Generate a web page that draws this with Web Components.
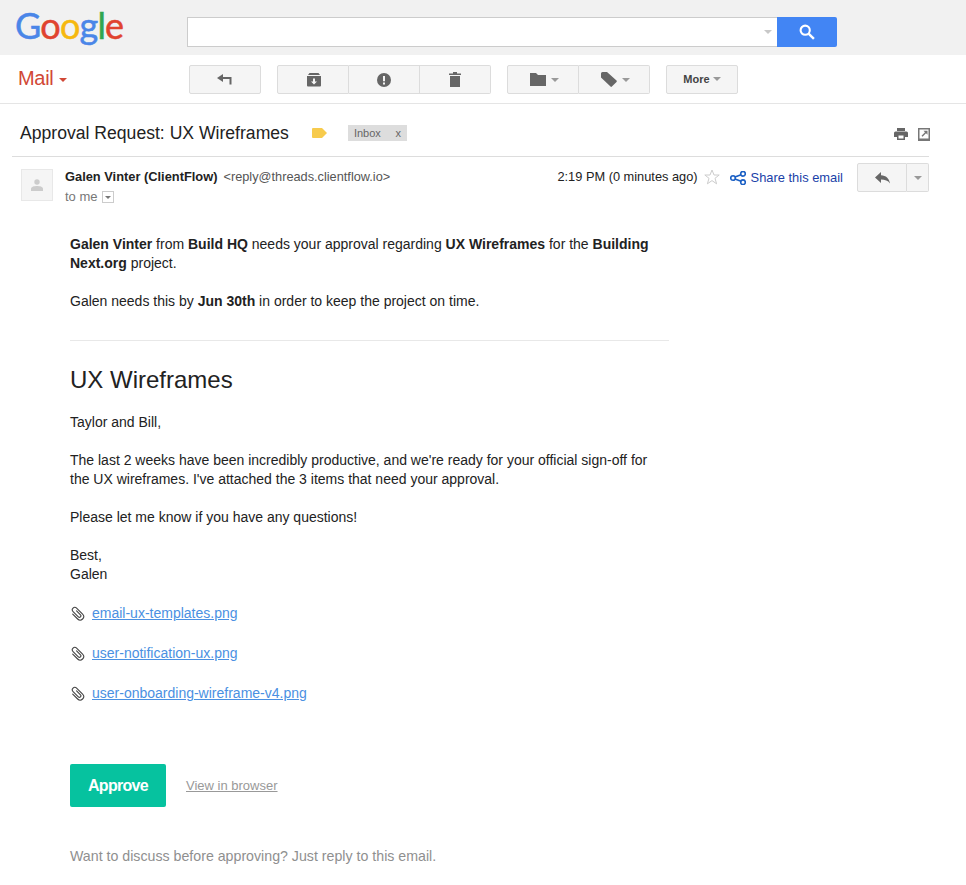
<!DOCTYPE html>
<html>
<head>
<meta charset="utf-8">
<title>Approval Request: UX Wireframes</title>
<style>
  html, body { margin: 0; padding: 0; background: #fff; }
  body { font-family: "Liberation Sans", Arial, sans-serif; color: #222; height: 885px; overflow: hidden; }
</style>
</head>
<body>
<mail-header></mail-header>
<mail-toolbar></mail-toolbar>
<mail-subject></mail-subject>
<mail-meta></mail-meta>
<mail-body>
  <attach-link slot="files">email-ux-templates.png</attach-link>
  <attach-link slot="files">user-notification-ux.png</attach-link>
  <attach-link slot="files">user-onboarding-wireframe-v4.png</attach-link>
</mail-body>

<script>
class MailHeader extends HTMLElement {
  constructor() {
    super();
    this.attachShadow({ mode: "open" });
  }
  connectedCallback() {
    this.shadowRoot.innerHTML = `
      <style>
        :host { display: flex; height: 55px; background: #f1f1f1; box-sizing: border-box; }
        .logo {
          width: 187px; box-sizing: border-box; padding: 0 0 0 15px;
          font: 36px/50px Lato, sans-serif; letter-spacing: -0.8px;
          -webkit-text-stroke: 0.5px currentColor;
        }
        .b { color: #4a86e8; } .r { color: #e0432f; } .y { color: #f6b80e; } .g { color: #2fa650; }
        .search {
          margin-top: 17px; width: 590px; height: 30px; box-sizing: border-box;
          background: #fff; border: 1px solid #ccc; border-right: 0;
          display: flex; align-items: center; justify-content: flex-end; padding-right: 5px;
        }
        .caret { width: 0; height: 0; border: 4px solid transparent; border-top: 4px solid #c8c8c8; border-bottom: 0; }
        .go {
          margin-top: 17px; width: 60px; height: 30px; background: #4285f4; border-radius: 0 2px 2px 0;
          display: flex; align-items: center; justify-content: center;
        }
      </style>
      <div class="logo"><span class="b">G</span><span class="r">o</span><span class="y">o</span><span class="b">g</span><span class="g">l</span><span class="r">e</span></div>
      <div class="search"><span class="caret"></span></div>
      <div class="go">
        <svg width="16" height="16" viewBox="0 0 16 16" fill="none" stroke="#fff" stroke-width="2.1">
          <circle cx="6.2" cy="6.2" r="4.6"/><path d="M9.6 9.6l5.3 5.2" stroke-width="2.4"/>
        </svg>
      </div>
    `;
  }
}
customElements.define("mail-header", MailHeader);

const ICONS = {
  back: `<svg width="15" height="11" viewBox="0 0 15 11"><path d="M6 0v3h8.500v7.500h-2V5H6v3L0 4z" fill="#666"/></svg>`,
  archive: `<svg width="14" height="14" viewBox="0 0 14 14"><path d="M2.500 0h9L13 2H1z" fill="#666"/><path d="M0 3h14v9.500a1 1 0 0 1-1 1H1a1 1 0 0 1-1-1z" fill="#666"/><path d="M6 5.500h2v3h2l-3 3-3-3h2z" fill="#f5f5f5"/></svg>`,
  spam: `<svg width="14" height="14" viewBox="0 0 14 14"><circle cx="7" cy="7" r="7" fill="#666"/><path d="M6 3h2v5.200H6zM6 9.400h2v2H6z" fill="#f5f5f5"/></svg>`,
  trash: `<svg width="12" height="15" viewBox="0 0 12 15"><path d="M0 1.500h4V0h4v1.500h4v1.600H0zM1 4h10v11H1z" fill="#666"/></svg>`,
  folder: `<svg width="16" height="13" viewBox="0 0 16 13"><path d="M0 0h6l2 2h8v11H0z" fill="#666"/></svg>`,
  tag: `<svg width="16" height="15" viewBox="0 0 16 15"><path d="M0 1.500A1.500 1.500 0 0 1 1.500 0H6l9.500 8.500a1 1 0 0 1 0 1.400l-4.600 4.700a1 1 0 0 1-1.400 0L0 5.500z" fill="#666"/></svg>`
};

class ToolBtn extends HTMLElement {
  constructor() {
    super();
    this.attachShadow({ mode: "open" });
  }
  connectedCallback() {
    const icon = this.getAttribute("icon");
    const caret = this.hasAttribute("caret");
    this.shadowRoot.innerHTML = `
      <style>
        :host {
          display: flex; align-items: center; justify-content: center; gap: 5px;
          box-sizing: border-box; height: 29px; flex: none;
          background: #f5f5f5; border: 1px solid #dcdcdc; border-radius: 2px; color: #444;
          font: bold 11px "Liberation Sans", Arial, sans-serif;
        }
        :host([mid]) { border-radius: 0; border-left: 0; }
        :host([first]) { border-radius: 2px 0 0 2px; }
        :host([last]) { border-radius: 0 2px 2px 0; border-left: 0; }
        .caret { width: 0; height: 0; border: 4px solid transparent; border-top: 4px solid #999; border-bottom: 0; }
      </style>
      ${icon ? ICONS[icon] : ""}<slot></slot>${caret ? `<span class="caret"></span>` : ""}
    `;
  }
}
customElements.define("tool-btn", ToolBtn);

class MailToolbar extends HTMLElement {
  constructor() {
    super();
    this.attachShadow({ mode: "open" });
  }
  connectedCallback() {
    this.shadowRoot.innerHTML = `
      <style>
        :host {
          display: flex; align-items: flex-start; height: 49px; box-sizing: border-box;
          padding-top: 10px; border-bottom: 1px solid #e5e5e5;
        }
        .mail {
          width: 189px; box-sizing: border-box; padding-left: 18px; color: #d14836;
          font-size: 20px; line-height: 26px; display: flex; align-items: center; gap: 6px;
          letter-spacing: -0.3px;
        }
        .mail i { width: 0; height: 0; border: 4px solid transparent; border-top: 4px solid #d14836; border-bottom: 0; margin-top: 3px; }
        .group { display: flex; }
      </style>
      <div class="mail">Mail<i></i></div>
      <tool-btn icon="back" style="width:72px;margin-right:16px;padding-right:1px"></tool-btn>
      <div class="group" style="margin-right:16px">
        <tool-btn icon="archive" first style="width:72px;padding-left:2px"></tool-btn>
        <tool-btn icon="spam" mid style="width:71px"></tool-btn>
        <tool-btn icon="trash" last style="width:71px"></tool-btn>
      </div>
      <div class="group" style="margin-right:16px">
        <tool-btn icon="folder" caret first style="width:72px;padding-left:3px"></tool-btn>
        <tool-btn icon="tag" caret last style="width:71px;padding-left:2px"></tool-btn>
      </div>
      <tool-btn caret style="width:72px;gap:3px;padding-bottom:1px">More</tool-btn>
    `;
  }
}
customElements.define("mail-toolbar", MailToolbar);

class MailSubject extends HTMLElement {
  constructor() {
    super();
    this.attachShadow({ mode: "open" });
  }
  connectedCallback() {
    this.shadowRoot.innerHTML = `
      <style>
        :host {
          display: flex; align-items: center; height: 53px; box-sizing: border-box;
          margin: 0 37px 0 12px; padding: 6px 0 0 8px; border-bottom: 1px solid #ddd;
        }
        .title { font-size: 17.6px; color: #222; margin-right: 23px; }
        .label { margin-right: 21px; display: flex; }
        .chip {
          background: #ddd; color: #666; font-size: 11px; height: 16px; line-height: 16px;
          width: 59px; box-sizing: border-box; padding: 0 6px; display: flex; justify-content: space-between;
        }
        .tools { margin: 0 -1px 0 auto; display: flex; align-items: center; gap: 10px; padding-top: 2px; }
      </style>
      <span class="title">Approval Request: UX Wireframes</span>
      <span class="label">
        <svg width="15" height="10" viewBox="0 0 15 10"><path d="M1 0h9l5 5-5 5H1a1 1 0 0 1-1-1V1a1 1 0 0 1 1-1z" fill="#f7cb4d"/></svg>
      </span>
      <span class="chip"><span>Inbox</span><span>x</span></span>
      <span class="tools">
        <svg width="14" height="12" viewBox="0 0 14 12"><path d="M3 0h8v3H3zM1.500 3.500h11A1.500 1.500 0 0 1 14 5v4h-3v3H3V9H0V5a1.500 1.500 0 0 1 1.500-1.500zM4.500 7.500v3h5v-3z" fill="#666"/></svg>
        <svg width="12" height="13" viewBox="0 0 12 13"><path d="M0 0h12v13H0z" fill="#777"/><path d="M1.500 1.500h9v9h-9z" fill="#fff"/><path d="M5.500 2.800h4v4L8 5.300 4.500 8.800 3.500 7.800 7 4.300z" fill="#777"/></svg>
      </span>
    `;
  }
}
customElements.define("mail-subject", MailSubject);

class MailMeta extends HTMLElement {
  constructor() {
    super();
    this.attachShadow({ mode: "open" });
  }
  connectedCallback() {
    this.shadowRoot.innerHTML = `
      <style>
        :host { display: flex; align-items: flex-start; padding: 12px 37px 0 21px; height: 57px; box-sizing: border-box; font-size: 12.700px; }
        .avatar {
          width: 32px; height: 32px; box-sizing: border-box; background: #f5f5f5; border: 1px solid #e8e8e8;
          display: flex; align-items: center; justify-content: center; margin-right: 12px; flex: none;
        }
        .who { line-height: 16px; }
        .line { display: flex; align-items: baseline; }
        b { color: #222; margin-right: 6px; font-size: 12.850px; }
        .addr { color: #555; font-size: 12.750px; }
        .to { color: #777; display: flex; align-items: center; gap: 4px; margin-top: 4px; font-size: 13px; }
        .to i {
          width: 10px; height: 10px; border: 1px solid #ccc; display: flex; align-items: center; justify-content: center;
        }
        .to i::after { content: ""; border: 3px solid transparent; border-top: 3px solid #777; border-bottom: 0; }
        .right { margin: -6px 0 0 auto; display: flex; align-items: center; }
        .time { color: #222; line-height: 16px; margin-right: 6px; padding-bottom: 1px; font-size: 12.800px; }
        .star { margin: 0 10px 2px 0; }
        .share { display: flex; align-items: center; gap: 5px; color: #1a3fa8; font-size: 12.900px; line-height: 16px; margin-right: 14px; }
        .reply { display: flex; }
      </style>
      <div class="avatar">
        <svg width="12" height="12" viewBox="0 0 12 12"><circle cx="6" cy="3" r="2.700" fill="#ccc"/><path d="M0 12V9.500C0 7.800 3.500 7 6 7s6 .8 6 2.500V12z" fill="#ccc"/></svg>
      </div>
      <div class="who">
        <div class="line"><b>Galen Vinter (ClientFlow)</b><span class="addr">&lt;reply@threads.clientflow.io&gt;</span></div>
        <div class="to">to me <i></i></div>
      </div>
      <div class="right">
        <span class="time">2:19 PM (0 minutes ago)</span>
        <svg class="star" width="16" height="16" viewBox="0 0 16 16"><path d="M8 1l2 5h5.200l-4.200 3.300 1.600 5.500L8 11.600l-4.600 3.200L5 9.300.8 6H6z" fill="none" stroke="#ccc"/></svg>
        <span class="share">
          <svg width="16" height="14" viewBox="0 0 16 14" fill="none" stroke="#1a5fc4" stroke-width="1.600"><circle cx="3" cy="7" r="2.300"/><circle cx="13" cy="2.800" r="2.300"/><circle cx="13" cy="11.200" r="2.300"/><path d="M5 6l6-2.300M5 8l6 2.300"/></svg>
          Share this email
        </span>
        <div class="reply">
          <tool-btn first style="width:50px"><svg width="15" height="12" viewBox="0 0 15 12"><path d="M6 0v3.200c5 .3 8 3 9 8.300-2-3-5-4-9-4V11L0 5.500z" fill="#666"/></svg></tool-btn>
          <tool-btn last caret style="width:22px"></tool-btn>
        </div>
      </div>
    `;
  }
}
customElements.define("mail-meta", MailMeta);

class AttachLink extends HTMLElement {
  constructor() {
    super();
    this.attachShadow({ mode: "open" });
  }
  connectedCallback() {
    this.shadowRoot.innerHTML = `
      <style>
        :host { display: flex; align-items: center; gap: 6px; height: 19px; margin-bottom: 21px; }
        a { color: #4a90e2; text-decoration: underline; font-size: 14px; }
        svg { flex: none; margin-top: -2px; }
      </style>
      <svg width="16" height="16" viewBox="0 0 16 16" fill="none" stroke="#444" stroke-width="1.100" stroke-linecap="round">
        <path transform="rotate(-45 8 8)" d="M8.500 5.500V11a1.500 1.500 0 0 1-3 0V3.500a2.500 2.500 0 0 1 5 0V12a3.500 3.500 0 0 1-7 0V5"/>
      </svg>
      <a href="#"><slot></slot></a>
    `;
  }
}
customElements.define("attach-link", AttachLink);

class MailBody extends HTMLElement {
  constructor() {
    super();
    this.attachShadow({ mode: "open" });
  }
  connectedCallback() {
    this.shadowRoot.innerHTML = `
      <style>
        :host {
          display: block; width: 600px; margin-left: 70px; padding-top: 21px;
          font-size: 14px; line-height: 19px; color: #222;
        }
        p { margin: 0 0 19px; }
        hr { border: 0; border-top: 1px solid #e8e8e8; margin: 29px 1px 0 0; }
        h1 { font-size: 24px; line-height: 30px; font-weight: normal; margin: 24px 0 18px; color: #222; }
        .files { margin-top: 20px; }
        .actions { display: flex; align-items: center; gap: 20px; margin-top: 61px; }
        .approve {
          width: 96px; height: 43px; background: #06c29f; color: #fff; border-radius: 2px;
          font-size: 16px; letter-spacing: -0.7px; font-weight: bold; display: flex; align-items: center; justify-content: center;
          text-decoration: none;
        }
        .view { color: #999; font-size: 13px; }
        .foot { color: #8f8f8f; margin: 40px 0 0; font-size: 14.200px; }
      </style>
      <p><b>Galen Vinter</b> from <b>Build HQ</b> needs your approval regarding <b>UX Wireframes</b> for the <b>Building</b><br><b>Next.org</b> project.</p>
      <p style="margin:0">Galen needs this by <b>Jun 30th</b> in order to keep the project on time.</p>
      <hr>
      <h1>UX Wireframes</h1>
      <p>Taylor and Bill,</p>
      <p>The last 2 weeks have been incredibly productive, and we're ready for your official sign-off for<br>the UX wireframes. I've attached the 3 items that need your approval.</p>
      <p>Please let me know if you have any questions!</p>
      <p style="margin:0">Best,<br>Galen</p>
      <div class="files"><slot name="files"></slot></div>
      <div class="actions">
        <a class="approve" href="#">Approve</a>
        <a class="view" href="#">View in browser</a>
      </div>
      <p class="foot">Want to discuss before approving? Just reply to this email.</p>
    `;
  }
}
customElements.define("mail-body", MailBody);
</script>
</body>
</html>
